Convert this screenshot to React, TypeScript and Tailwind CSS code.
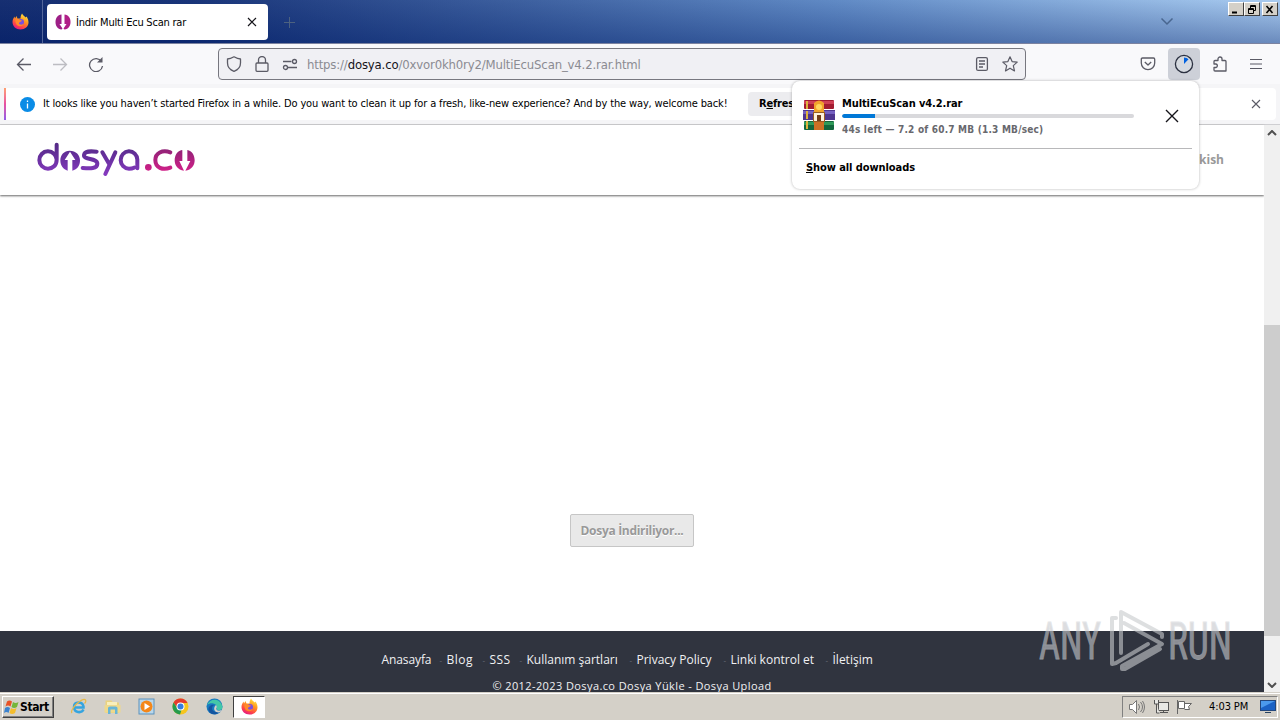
import type { ReactNode } from 'react';

const UI_FONT = "font-['DejaVu_Sans_Condensed','DejaVu_Sans',sans-serif] [font-stretch:condensed]";
const SITE_FONT = "font-['Open_Sans','Noto_Sans',sans-serif] [font-stretch:normal]";

const footerLinks = [
  { label: 'Anasayfa', className: 'w-[50px] tracking-[-0.1px]' },
  { label: 'Blog', className: 'w-[28px] tracking-[0.5px]' },
  { label: 'SSS', className: 'w-[22px] tracking-[0.4px]' },
  { label: 'Kullanım şartları', className: 'w-[95px]' },
  { label: 'Privacy Policy', className: 'w-[79px]' },
  { label: 'Linki kontrol et', className: 'w-[87px]' },
  { label: 'İletişim', className: 'w-[43px]' },
];

function FirefoxIcon({ id }: { id: string }) {
  return (
    <svg width="17" height="17" viewBox="0 0 34 34">
      <defs>
        <linearGradient id={id} x1="0.8" y1="0" x2="0.3" y2="1">
          <stop offset="0" stopColor="#fff04a" />
          <stop offset="0.4" stopColor="#ff9a1f" />
          <stop offset="0.75" stopColor="#ff4646" />
          <stop offset="1" stopColor="#e31587" />
        </linearGradient>
      </defs>
      <path d="M20 1c2 4 5 5 7 8l2-2c3 4 4 8 4 12 0 8-7 14-16 14S1 27 1 18c0-5 2-8 4-11l1 4 3-5 2 5 6 0c0-4 1-7 3-10z" fill={`url(#${id})`} />
      <circle cx="18" cy="18" r="6" fill="#7a4fe0" />
      <path d="M7 13c4-2 7-1 9 1l4 1c-1 3-5 2-6 5s5 5 9 2c-2 6-13 6-15-1-1-3-2-5-1-8z" fill="#ff8a2b" />
    </svg>
  );
}

function SiteIcon() {
  return (
    <svg width="16" height="16" viewBox="0 0 32 32">
      <path d="M13 1C5 2 1 8 1 16s4 14 12 15l2-2-6-9h4z" fill="#9d1f86" />
      <path d="M19 1c8 1 12 7 12 15s-4 14-12 15l-2-2 6-9h-4z" fill="#b01f87" />
    </svg>
  );
}

function DosyaLogo() {
  return (
    <svg width="160" height="38" viewBox="108 62 480 114" fill="none" strokeLinecap="round">
      <defs>
        <linearGradient id="purple" x1="0" y1="60" x2="0" y2="170" gradientUnits="userSpaceOnUse">
          <stop offset="0" stopColor="#502a80" />
          <stop offset="0.5" stopColor="#6930a0" />
          <stop offset="1" stopColor="#8a3cc4" />
        </linearGradient>
        <linearGradient id="pink" x1="0" y1="85" x2="0" y2="152" gradientUnits="userSpaceOnUse">
          <stop offset="0" stopColor="#8f2277" />
          <stop offset="1" stopColor="#d02088" />
        </linearGradient>
      </defs>
      <g stroke="url(#purple)" strokeWidth="12">
        <path d="M170 118A26 26 0 1 0 144 145C158 145 170 135 170 118V73" />
        <path d="M290 94C270 92 254 92 252 104C250 120 292 112 292 130C292 146 270 145 248 143" />
        <path d="M307 96L327 130M346 96L316 161" />
        <path d="M412 144V118A25 26 0 1 0 387 145C392 145 398 144 402 142" />
      </g>
      <path d="M209 91C192 91 181 104 181 120S190 147 203 151V119L194 119L210 94L226 119H217V151C232 147 240 136 240 120S228 91 209 91Z" fill="url(#purple)" />
      <circle cx="445" cy="141" r="10" fill="url(#pink)" />
      <path d="M511 96C487 87 466 98 466 119C466 142 488 151 511 142" stroke="url(#pink)" strokeWidth="12" />
      <path d="M546 89C532 91 524 105 524 120S533 149 552 151L538 122H547V90Z" fill="url(#pink)" />
      <path d="M562 89C576 91 584 105 584 120S575 149 556 151L571 122H562Z" fill="url(#pink)" />
    </svg>
  );
}

function RarIcon() {
  return (
    <svg width="32" height="32" viewBox="0 0 32 32" className="shrink-0">
      <rect x="1" y="1" width="30" height="9" rx="1" fill="#a31c30" />
      <rect x="1" y="2" width="30" height="3" fill="#cf4055" />
      <rect x="0" y="11" width="32" height="10" fill="#4f3690" />
      <rect x="0" y="12" width="32" height="3" fill="#7560c0" />
      <rect x="1" y="22" width="30" height="9" rx="1" fill="#12663c" />
      <rect x="1" y="23" width="30" height="3" fill="#2f9a58" />
      <path d="M4 2V30" stroke="#ddb23d" strokeWidth="2" strokeDasharray="8 2" />
      <path d="M11 4Q16-1 21 4V15H11Z" fill="#f0a32c" />
      <circle cx="16" cy="8" r="3" fill="#ffd65c" />
      <rect x="11" y="22" width="10" height="9" fill="#cc7025" />
      <rect x="10.500" y="13.500" width="11" height="9" fill="#fff2dc" stroke="#995c22" />
      <rect x="14" y="16" width="4" height="6" fill="#733d18" />
    </svg>
  );
}

function AnyRunMark() {
  return (
    <svg width="204" height="64" viewBox="0 0 204 64" className="absolute left-[1038px] top-[609px] opacity-60">
      <g fill="#c6c8cc" stroke="#d4d6d9" strokeWidth="0.8" fontFamily="Roboto, sans-serif" fontSize="51">
        <text x="1" y="50" textLength="62" lengthAdjust="spacingAndGlyphs">ANY</text>
        <text x="130" y="50" textLength="64" lengthAdjust="spacingAndGlyphs">RUN</text>
      </g>
      <g fill="none" stroke="#c8cacd" strokeWidth="4" strokeLinejoin="round" strokeLinecap="round">
        <path d="M78 9H74V55L78 54L110 35" />
        <path d="M83 44V3L124 25V28" />
        <path d="M86 14L124 35L84 57V60H87L122 40" />
      </g>
    </svg>
  );
}

function WindowButton({ children }: { children: ReactNode }) {
  return (
    <div className="flex h-[14px] w-4 items-center justify-center border border-t-white border-r-[#404040] border-b-[#404040] border-l-white bg-[#d4d0c8]">
      <svg width="12" height="11" viewBox="0 0 12 11" fill="none" stroke="#000">{children}</svg>
    </div>
  );
}

function TitleBar() {
  return (
    <div className="relative flex h-11 shrink-0 border-b border-[#7c83a0] bg-[linear-gradient(180deg,rgba(255,255,255,0.05),rgba(10,36,106,0.38)),linear-gradient(96deg,#0a246a_0%,#0d2a72_15%,#5884c2_65%,#a6caf0_100%)]">
      <div className="flex w-[43px] items-center justify-center border-r border-[#53669a] pr-[2px]">
        <FirefoxIcon id="fxTitle" />
      </div>
      <div className="mt-1 ml-1 flex h-9 w-[221px] items-center rounded bg-white pl-2">
        <SiteIcon />
        <span className="mt-[3px] ml-[5px] text-[11px] tracking-[-0.22px] whitespace-nowrap">İndir Multi Ecu Scan rar</span>
        <svg className="mr-[11px] ml-auto" width="10" height="10" viewBox="0 0 10 10" stroke="#15141a" strokeWidth="1.200"><path d="M1 1l8 8M9 1l-8 8" /></svg>
      </div>
      <svg className="mt-4 ml-[15px]" width="13" height="13" viewBox="0 0 13 13" stroke="#4d6280"><path d="M6.500 1v11M1 6.500h11" /></svg>
      <svg className="mt-[17px] mr-[54px] ml-auto" width="14" height="9" viewBox="0 0 14 9" fill="none" stroke="#49668f" strokeWidth="1.500"><path d="M1.500 1.500L7 7l5.500-5.500" /></svg>
      <div className="mt-[2px] mr-[2px] flex">
        <WindowButton><path d="M2 8.500h5" strokeWidth="2" /></WindowButton>
        <WindowButton><path d="M4.500 4V1.500h5v5H8M4.500 2.500h5M2.500 4.500h5v5h-5zM2.500 5.500h5" /></WindowButton>
        <div className="w-[2px]" />
        <WindowButton><path d="M2.500 2l6 7M8.500 2l-6 7" strokeWidth="1.600" /></WindowButton>
      </div>
    </div>
  );
}

function Toolbar() {
  return (
    <div className="flex h-10 shrink-0 items-center bg-[#f9f9fb]">
      <svg className="ml-4" width="16" height="16" viewBox="0 0 16 16" fill="none" stroke="#5b5b66" strokeWidth="1.300"><path d="M15 8.500H2M7.500 2.500l-6 6 6 6" /></svg>
      <svg className="ml-5" width="16" height="16" viewBox="0 0 16 16" fill="none" stroke="#bdbdc2" strokeWidth="1.300"><path d="M1 8.500h13M8.500 2.500l6 6-6 6" /></svg>
      <svg className="ml-5" width="16" height="16" viewBox="0 0 16 16" fill="none" stroke="#5b5b66" strokeWidth="1.300"><path d="M13.500 5.500A6.500 6.500 0 1 0 14.500 10" /><path d="M14.500 1v5.500H9z" fill="#5b5b66" stroke="none" /></svg>
      <div className="ml-[114px] flex h-8 w-[808px] items-center rounded border border-[#77777f] bg-[#f0f0f4] pl-[7px] pr-[7px]">
        <svg width="16" height="16" viewBox="0 0 16 16" fill="none" stroke="#5b5b66" strokeWidth="1.300"><path d="M8 .8C6 2 4 3 1.500 3v4c0 4 3 7 6.500 8.300C11.500 14 14.500 11 14.500 7V3C12 3 10 2 8 .8z" strokeLinejoin="round" /></svg>
        <svg className="ml-3" width="16" height="16" viewBox="0 0 16 16" fill="none" stroke="#5b5b66" strokeWidth="1.300"><rect x="2" y="7" width="12" height="8.300" rx="1" /><path d="M4.500 7V4a3.500 3.500 0 0 1 7 0v3" /></svg>
        <svg className="ml-3" width="16" height="16" viewBox="0 0 16 16" fill="none" stroke="#5b5b66" strokeWidth="1.300"><path d="M1 5.500h8.500M6 11.500h9" /><circle cx="12.500" cy="5.500" r="2" /><circle cx="3.500" cy="11.500" r="2" /></svg>
        <span className="mt-px ml-[9px] text-[13px] tracking-[-0.16px] whitespace-nowrap text-[#8b8b92]">
          https://<span className="text-[#15141a]">dosya.co</span>/0xvor0kh0ry2/MultiEcuScan_v4.2.rar.html
        </span>
        <svg className="ml-auto" width="16" height="16" viewBox="0 0 16 16" fill="none" stroke="#5b5b66" strokeWidth="1.300"><rect x="2.600" y="1.600" width="10.800" height="12.800" rx="1.500" /><path d="M5 5h6M5 8h6M5 11h4" /></svg>
        <svg className="ml-3" width="16" height="16" viewBox="0 0 16 16" fill="none" stroke="#5b5b66" strokeWidth="1.200" strokeLinejoin="round"><path d="M8 .8l2.100 4.800 5.100.5-3.900 3.500 1.200 5.300L8 12.200l-4.500 2.700 1.200-5.300L.8 6.100l5.100-.5z" /></svg>
      </div>
      <svg className="ml-[114px]" width="16" height="16" viewBox="0 0 16 16" fill="none" stroke="#5b5b66" strokeWidth="1.300" strokeLinejoin="round"><path d="M2.500 2h11q1.200 0 1.200 1.200V7A6.700 6.700 0 0 1 1.300 7V3.200Q1.300 2 2.500 2zM4.800 6L8 9l3.200-3" /></svg>
      <div className="ml-3 flex size-8 items-center justify-center rounded bg-[#cdd0d8]">
        <svg width="20" height="20" viewBox="0 0 20 20"><circle cx="10" cy="10" r="8.600" fill="#d5d9df" stroke="#2b3040" strokeWidth="1.300" /><path d="M10 10V3.500Q13 3.500 14.500 5.300z" fill="#0061e0" /></svg>
      </div>
      <svg className="ml-3" width="17" height="17" viewBox="0 0 17 17" fill="none" stroke="#5b5b66" strokeWidth="1.300" strokeLinejoin="round"><path d="M2 7V5.500Q2 4.500 3 4.500h3V3a2 2 0 0 1 4 0v1.500h3q1 0 1 1V15H3q-1 0-1-1v-2.500h2a1.800 1.800 0 0 0 0-3.500H2z" /></svg>
      <svg className="ml-[19px]" width="16" height="16" viewBox="0 0 16 16" stroke="#5b5b66" strokeWidth="1.200"><path d="M2 3.500h12M2 8h12M2 12.500h12" /></svg>
    </div>
  );
}

function NotificationBar() {
  return (
    <div className="flex h-[41px] shrink-0 items-start border-b border-[#cfcfd2] bg-[#f5f5f7] px-1 pt-1">
      <div className="flex h-8 w-full items-center rounded-sm bg-white">
        <div className="h-full w-[2px] shrink-0 bg-linear-to-b from-[#ffa070] via-[#e850a0] to-[#9059e8]" />
        <svg className="ml-[14px] shrink-0" width="15" height="15" viewBox="0 0 15 15"><circle cx="7.500" cy="7.500" r="7.500" fill="#0a8ce6" /><path d="M7.500 6.500v5M7.500 3.500v1.500" stroke="#fff" strokeWidth="1.300" /></svg>
        <span className="ml-2 w-[705px] shrink-0 text-[11px] tracking-[-0.145px] whitespace-nowrap">
          It looks like you haven’t started Firefox in a while. Do you want to clean it up for a fresh, like-new experience? And by the way, welcome back!
        </span>
        <div className="flex h-6 w-[44px] items-center overflow-hidden rounded-l bg-[#ececef] pl-[11px] text-[11px] font-bold tracking-[-0.2px] whitespace-nowrap">
          R<u>e</u>fresh
        </div>
        <svg className="mr-[15px] ml-auto shrink-0" width="10" height="10" viewBox="0 0 10 10" stroke="#5b5b66" strokeWidth="1.100"><path d="M1 1l8 8M9 1l-8 8" /></svg>
      </div>
    </div>
  );
}

function DownloadsPanel() {
  return (
    <div className="absolute top-[81px] left-[792px] h-[108px] w-[407px] rounded-lg bg-white px-[7px] shadow-[0_0_3px_rgba(0,0,0,0.3)]">
      <div className="flex h-[68px] items-center border-b border-[#b8b8ba] pl-1">
        <RarIcon />
        <div className="ml-[7px] flex w-[292px] flex-col pt-[3px]">
          <span className="text-[11px] leading-[15px] font-bold tracking-[-0.1px] whitespace-nowrap">MultiEcuScan v4.2.rar</span>
          <div className="mt-[3px] h-1 overflow-hidden rounded-full bg-[#d9d9dc]">
            <div className="h-full w-[33px] rounded-l-full bg-[#0078d7]" />
          </div>
          <span className="mt-[5px] text-[10px] leading-[14px] font-bold tracking-[0.21px] whitespace-nowrap text-[#68686d]">44s left — 7.2 of 60.7 MB (1.3 MB/sec)</span>
        </div>
        <svg className="mt-[2px] mr-[13px] ml-auto" width="14" height="14" viewBox="0 0 14 14" stroke="#15141a" strokeWidth="1.400"><path d="M1 1l12 12M13 1L1 13" /></svg>
      </div>
      <div className="flex h-[39px] items-center pl-[7px] text-[11px] font-bold tracking-[-0.08px] whitespace-nowrap">
        <span><u>S</u>how all downloads</span>
      </div>
    </div>
  );
}

function SitePage() {
  return (
    <div className={`flex min-w-0 flex-1 flex-col bg-white ${SITE_FONT}`}>
      <header className="flex h-[70px] shrink-0 items-center justify-between pr-10 pl-9 shadow-[0_1px_2px_rgba(0,0,0,0.6)]">
        <DosyaLogo />
        <span className="text-[12px] font-bold text-[#999]">Turkish</span>
      </header>
      <main className="flex flex-1 justify-center pt-[319px]">
        <button className="h-[33px] w-[124px] rounded-[2px] border border-[#c6c6c6] bg-[#e9e9e9] text-[12px] font-bold tracking-[-0.3px] whitespace-nowrap text-[#999] [text-shadow:0_1px_0_#fff]">
          Dosya İndiriliyor...
        </button>
      </main>
      <footer className="flex h-[61px] shrink-0 flex-col items-center overflow-hidden bg-[#30343f] pt-5 text-[12px] text-[#f0f1f3]">
        <nav className="flex h-[18px] items-center pr-[7px]">
          {footerLinks.map((link, i) => (
            <div key={link.label} className="flex items-center">
              {i > 0 && <span className="w-[15px] pl-2 text-[8px] text-[#6f737c]">-</span>}
              <a className={`whitespace-nowrap ${link.className}`}>{link.label}</a>
            </div>
          ))}
        </nav>
        <p className="mt-[9px] text-[11px] leading-4 tracking-[0.4px] whitespace-nowrap">© 2012-2023 Dosya.co Dosya Yükle - Dosya Upload</p>
      </footer>
    </div>
  );
}

function Scrollbar() {
  return (
    <div className="flex w-4 shrink-0 flex-col items-center bg-[#f0f0f0]">
      <svg className="mt-[5px]" width="10" height="6" viewBox="0 0 10 6" fill="none" stroke="#505050" strokeWidth="2"><path d="M1 5l4-4 4 4" /></svg>
      <div className="mt-[189px] h-[311px] w-full bg-[#cdcdcd]" />
      <svg className="mt-auto mb-1" width="10" height="6" viewBox="0 0 10 6" fill="none" stroke="#505050" strokeWidth="2"><path d="M1 1l4 4 4-4" /></svg>
    </div>
  );
}

function Taskbar() {
  return (
    <div className="flex h-7 shrink-0 items-center border-t border-[#d4d0c8] bg-[#d4d0c8] shadow-[inset_0_1px_0_#fff]">
      <div className="ml-[2px] flex h-[22px] w-[52px] items-center border border-t-white border-r-[#404040] border-b-[#404040] border-l-white pl-px shadow-[inset_-1px_-1px_0_#808080]">
        <svg width="16" height="16" viewBox="0 0 32 32" className="shrink-0">
          <path d="M6 5q5-4 10 0l-3 10q-5-4-10 0z" fill="#e85226" />
          <path d="M18 6q5 4 11 0l-3 10q-6 4-11 0z" fill="#74b63a" />
          <path d="M2 18q5-4 10 0l-3 10q-4-4-9 0z" fill="#3b83cf" />
          <path d="M14 18q5 4 11 0l-3 10q-6 4-11 0z" fill="#f4bd2c" />
        </svg>
        <span className="text-[12px] font-bold tracking-[-0.4px]">Start</span>
      </div>
      <div className="ml-4 flex items-center gap-[17px]">
        <svg width="17" height="17" viewBox="0 0 34 34" fill="none"><path d="M27 23C23 31 8 30 8 18S25 6 27 17L27 19H9" stroke="#35a4df" strokeWidth="5" /><path d="M4 30C-2 24 25-3 31 4Q33 7 29 11" stroke="#e7b948" strokeWidth="2.500" /></svg>
        <svg width="17" height="17" viewBox="0 0 34 34"><path d="M3 5h12l3 4h12v21H3z" fill="#ead27f" /><path d="M6 8h20v12H6z" fill="#f9efba" /><path d="M1 14h32v15H1z" fill="#eed98c" /><path d="M8 32V20q0-3 4-3h11q4 0 4 3v12h-5v-9H13v9z" fill="#68b5d6" /></svg>
        <svg width="17" height="17" viewBox="0 0 34 34"><rect x="2" y="2" width="30" height="30" fill="#b9d7eb" stroke="#5b92bd" strokeWidth="2" /><circle cx="17" cy="17" r="12" fill="#f48719" /><path d="M13 10l11 7-11 7z" fill="#fff" /></svg>
        <svg width="17" height="17" viewBox="0 0 34 34"><circle cx="17" cy="17" r="16" fill="#f6c51d" /><path d="M3 9A16 16 0 0 1 31 10H17L11 20z" fill="#e33b2e" /><path d="M3 9L11 21l8 3-3 9A16 16 0 0 1 3 9z" fill="#259b4d" /><circle cx="17" cy="17" r="8" fill="#fff" /><circle cx="17" cy="17" r="6" fill="#347de0" /></svg>
        <svg width="17" height="17" viewBox="0 0 34 34"><circle cx="17" cy="17" r="16" fill="#187ac0" /><path d="M2 14A16 16 0 0 1 33 18c0 8-12 8-12 3 4-9-11-14-19-7z" fill="#43c7a8" /><path d="M17 14c-8 3-7 15 9 14-6 8-19 5-21-4-1-7 6-12 12-10z" fill="#1455a0" /><path d="M20 14c4 5-1 6 1 9 3 4 9 2 11 0-1 3-3 5-6 6-11 0-12-10-6-15z" fill="#d4d0c8" /></svg>
      </div>
      <div className="ml-[10px] flex h-[22px] w-8 items-center justify-center border border-t-[#404040] border-r-white border-b-white border-l-[#404040] bg-white">
        <FirefoxIcon id="fxTask" />
      </div>
      <div className="mr-[2px] ml-auto flex h-[22px] w-[156px] items-center border border-t-[#808080] border-r-white border-b-white border-l-[#808080] pl-[5px] pr-px">
        <svg width="18" height="16" viewBox="0 0 18 16" fill="#fff" stroke="#777"><path d="M1.500 5.500h3l4-4v13l-4-4h-3z" /><path d="M10.500 5q2 3 0 6M12.500 3q4 5 0 10M14.500 2q4 6 0 12" fill="none" /></svg>
        <svg className="ml-[7px]" width="17" height="16" viewBox="0 0 17 16" fill="#e8e8e5" stroke="#555"><rect x="5.500" y="3.500" width="10" height="8" /><path d="M7 13.500h8M10.500 12v2" /><path d="M1.500 1v4h4V1M3.500 5v9h3" /></svg>
        <svg className="ml-[6px]" width="17" height="16" viewBox="0 0 17 16" fill="#fff" stroke="#666"><path d="M1.500 1v14M2.500 2.500h6v7h-6zM8.500 4.500h7l-3 3 1 3h-5" /></svg>
        <span className="mt-[2px] ml-4 text-[11px] tracking-[-0.1px] whitespace-nowrap">4:03 PM</span>
        <svg className="ml-auto" width="16" height="15" viewBox="0 0 16 15"><rect x=".5" y="1.500" width="15" height="10" fill="#1b62c4" stroke="#23477c" /><path d="M1 2h14L1 9z" fill="#4b9aec" /><path d="M5 13.500h6" stroke="#25405f" /></svg>
      </div>
    </div>
  );
}

export default function App() {
  return (
    <div className={`relative flex h-[720px] w-[1280px] flex-col overflow-hidden bg-white text-black ${UI_FONT}`}>
      <TitleBar />
      <Toolbar />
      <NotificationBar />
      <div className="flex min-h-0 flex-1">
        <SitePage />
        <Scrollbar />
      </div>
      <Taskbar />
      <DownloadsPanel />
      <AnyRunMark />
    </div>
  );
}
